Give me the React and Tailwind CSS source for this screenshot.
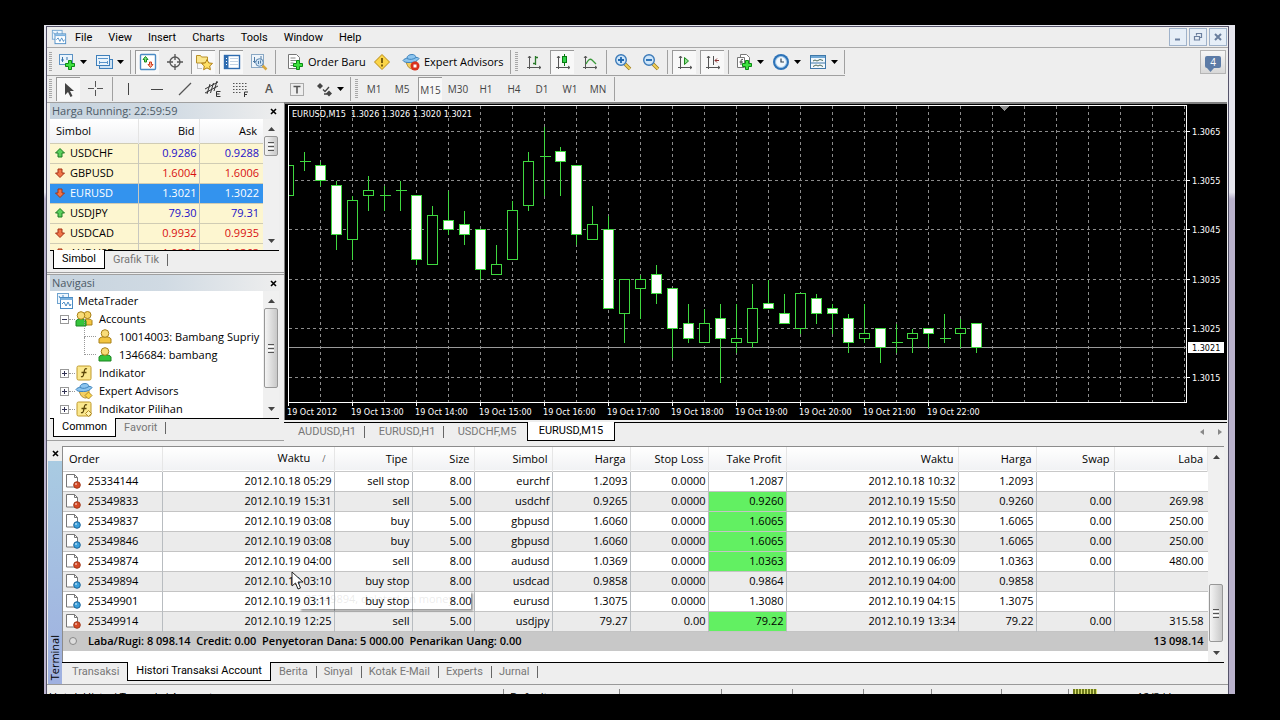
import { Fragment } from "react";

const quotes = [
  { symbol: "USDCHF", bid: "0.9286", ask: "0.9288", up: true },
  { symbol: "GBPUSD", bid: "1.6004", ask: "1.6006", up: false },
  { symbol: "EURUSD", bid: "1.3021", ask: "1.3022", up: false, selected: true },
  { symbol: "USDJPY", bid: "79.30", ask: "79.31", up: true },
  { symbol: "USDCAD", bid: "0.9932", ask: "0.9935", up: false },
  { symbol: "AUDUSD", bid: "1.0360", ask: "1.0363", up: false },
];

const orders = [
  ["25334144", "2012.10.18 05:29", "sell stop", "8.00", "eurchf", "1.2093", "0.0000", "1.2087", "2012.10.18 10:32", "1.2093", "", ""],
  ["25349833", "2012.10.19 15:31", "sell", "5.00", "usdchf", "0.9265", "0.0000", "0.9260", "2012.10.19 15:50", "0.9260", "0.00", "269.98"],
  ["25349837", "2012.10.19 03:08", "buy", "5.00", "gbpusd", "1.6060", "0.0000", "1.6065", "2012.10.19 05:30", "1.6065", "0.00", "250.00"],
  ["25349846", "2012.10.19 03:08", "buy", "5.00", "gbpusd", "1.6060", "0.0000", "1.6065", "2012.10.19 05:30", "1.6065", "0.00", "250.00"],
  ["25349874", "2012.10.19 04:00", "sell", "8.00", "audusd", "1.0369", "0.0000", "1.0363", "2012.10.19 06:09", "1.0363", "0.00", "480.00"],
  ["25349894", "2012.10.19 03:10", "buy stop", "8.00", "usdcad", "0.9858", "0.0000", "0.9864", "2012.10.19 04:00", "0.9858", "", ""],
  ["25349901", "2012.10.19 03:11", "buy stop", "8.00", "eurusd", "1.3075", "0.0000", "1.3080", "2012.10.19 04:15", "1.3075", "", ""],
  ["25349914", "2012.10.19 12:25", "sell", "5.00", "usdjpy", "79.27", "0.00", "79.22", "2012.10.19 13:34", "79.22", "0.00", "315.58"],
];

// open, high, low, close in points above 1.3000
const candles = [
  [52, 60, 51, 58], [59, 61, 57, 59], [58, 59, 54, 55], [54, 55, 41, 44],
  [43, 52, 39, 51], [52, 56, 49, 53], [52, 54, 49, 52], [53, 55, 49, 53],
  [52, 52, 38, 39], [38, 50, 38, 48], [47, 53, 44, 45], [46, 49, 42, 44],
  [45, 45, 35, 37], [36, 42, 36, 38], [39, 51, 39, 49], [50, 61, 49, 59],
  [60, 66, 52, 60], [61, 62, 52, 59], [58, 58, 42, 44], [43, 50, 43, 46],
  [45, 48, 29, 29], [28, 35, 22, 35], [33, 36, 27, 35], [36, 38, 30, 32],
  [33, 33, 19, 25], [26, 30, 22, 23], [22, 29, 22, 26], [27, 30, 14, 23],
  [22, 30, 20, 23], [22, 34, 21, 29], [30, 35, 29, 29], [28, 32, 26, 26],
  [25, 32, 24, 32], [31, 32, 26, 28], [29, 30, 24, 28], [27, 28, 20, 22],
  [23, 30, 22, 24], [25, 25, 18, 21], [22, 26, 20, 22], [23, 25, 20, 24],
  [25, 25, 21, 24], [23, 28, 22, 23], [24, 27, 21, 25], [26, 26, 20, 21],
];

const timeLabels = [
  "19 Oct 2012", "19 Oct 13:00", "19 Oct 14:00", "19 Oct 15:00", "19 Oct 16:00", "19 Oct 17:00",
  "19 Oct 18:00", "19 Oct 19:00", "19 Oct 20:00", "19 Oct 21:00", "19 Oct 22:00",
];

const priceY = (p) => Math.round(27 + (65 - p) * 4.918) + 0.5;

/* ---------- icons ---------- */

function Svg({ size = 18, children }) {
  return (
    <svg width={size} height={size} viewBox="0 0 18 18" fill="none" className="shrink-0">
      {children}
    </svg>
  );
}

const Plus = () => (
  <path d="M10.5 7.5h3v3h3v3h-3v3h-3v-3h-3v-3h3z" fill="#3fe03f" stroke="#0a8a14" />
);

const ZoomGlass = ({ plus }) => (
  <Svg>
    <path d="M11 11l5 5" stroke="#9a7a20" strokeWidth="3.5" />
    <path d="M11 11l5 5" stroke="#f0cf58" strokeWidth="2" />
    <circle cx="7" cy="7" r="5.3" fill="#cfe6fa" stroke="#3c7ab8" strokeWidth="1.4" />
    <path d={plus ? "M4 7h6M7 4v6" : "M4 7h6"} stroke="#1f68b0" strokeWidth="1.8" />
  </Svg>
);

const Axes = ({ children }) => (
  <Svg>
    <path d="M4.5 3v13M2 14.5h14M3 5l1.5-2L6 5M14 13l2 1.5-2 1.5" stroke="#555" />
    {children}
  </Svg>
);

const AppLogo = ({ size = 16 }) => (
  <Svg size={size}>
    <rect x="1.5" y="1.5" width="11" height="10" fill="#eef6fd" stroke="#6fa3cf" />
    <rect x="4.5" y="5.5" width="12" height="11" fill="#fff" stroke="#4a8bc4" />
    <path d="M4.5 7h12" stroke="#7db2de" strokeWidth="2" />
    <path d="M6 12l2-2 2 4 2-4 2 4 1-2M3 4l1 2M7 3v2" stroke="#4a8bc4" />
  </Svg>
);

const NewChartIcon = () => (
  <Svg>
    <rect x="1.5" y="1.5" width="13" height="10" fill="#eaf4fc" stroke="#5b92c4" />
    <path d="M4.5 4v5M3 7h3M9 4v3" stroke="#3874ab" />
    <Plus />
  </Svg>
);

const ProfilesIcon = () => (
  <Svg>
    <rect x="4.5" y="6.5" width="13" height="9" fill="#cfe3f4" stroke="#3f7fba" />
    <rect x="1.5" y="2.5" width="13" height="10" fill="#eaf4fc" stroke="#3f7fba" />
    <path d="M3 5.5h10M4 9.5h9M4.5 8v3M12.5 8v3" stroke="#5a95cb" />
  </Svg>
);

const MarketIcon = () => (
  <Svg>
    <rect x="1.5" y="1.5" width="15" height="15" rx="1" fill="#fff" stroke="#4a8bc4" strokeWidth="1.4" />
    <path d="M6.5 3.5L9 6.5H7.5V9h-2V6.5H4z" fill="#7de07d" stroke="#168a1c" />
    <path d="M11.5 14.5L14 11.5h-1.5V9h-2v2.5H9z" fill="#f6b09a" stroke="#d03a18" />
  </Svg>
);

const TargetIcon = () => (
  <Svg>
    <circle cx="9" cy="9" r="5" stroke="#555" strokeWidth="1.3" />
    <path d="M9 1v6M9 11v6M1 9h6M11 9h6" stroke="#555" strokeWidth="1.3" />
  </Svg>
);

const NavigatorIcon = () => (
  <Svg>
    <path d="M1.5 2.5h4l1 1.5h6v6h-11z" fill="#fbe68c" stroke="#b8902a" />
    <path d="M2.5 10.5v5h4" stroke="#888" strokeDasharray="1 1" />
    <path d="M12 6.5l1.7 3.4 3.8.5-2.8 2.6.7 3.7-3.4-1.8-3.4 1.8.7-3.7-2.8-2.6 3.8-.5z" fill="#ffe066" stroke="#b07f12" />
  </Svg>
);

const TerminalIcon = () => (
  <Svg>
    <rect x="1.5" y="2.5" width="15" height="13" fill="#fff" stroke="#2f6cb0" strokeWidth="1.4" />
    <rect x="2" y="3" width="3.5" height="12" fill="#2f6cb0" />
    <path d="M7 5.5h8M7 8.5h8M7 11.5h8" stroke="#c3d3e4" />
    <path d="M3 5.5h1M3 8.5h1M3 11.5h1" stroke="#fff" />
  </Svg>
);

const TesterIcon = () => (
  <Svg>
    <rect x="1.5" y="1.5" width="12" height="13" fill="#eef4fa" stroke="#8aa8c4" />
    <path d="M4.5 4v6M3 8.5h3M11 3v4" stroke="#4f7aa4" />
    <path d="M12.5 12.5l4 4" stroke="#d8a840" strokeWidth="2.5" />
    <circle cx="9.5" cy="9.5" r="3.8" fill="#cfe4f6" stroke="#5f88b0" />
    <path d="M8.5 8v3M10.5 7.5v3" stroke="#4f7aa4" />
  </Svg>
);

const OrderIcon = () => (
  <Svg>
    <path d="M2.5 1.5h8l3 3v11h-11z" fill="#fff" stroke="#777" />
    <path d="M4.5 5h5M4.5 7.5h6M4.5 10h3M4.5 12.5h3" stroke="#888" />
    <Plus />
  </Svg>
);

const WarnIcon = () => (
  <Svg>
    <path d="M9 1.5L16.5 9 9 16.5 1.5 9z" fill="#fbd548" stroke="#b98a12" strokeLinejoin="round" />
    <path d="M9 5v5M9 11.5v2" stroke="#5c4300" strokeWidth="1.6" />
  </Svg>
);

const ExpertIcon = ({ size = 18, stop }) => (
  <Svg size={size}>
    <path d="M4 8c1 5 3 8 7 8 3-1 3-5 3-8z" fill="#f3cf62" stroke="#b08a28" />
    <path d="M1 7.5C2 5.5 4 6 5 5c0-2 2-3.5 5-3.5 2.5 0 3.5 1 4 3 1.5 0 2.5 0 3 1-2 3-5 4-8.5 4S2 9.5 1 7.5z" fill="#8cc4ee" stroke="#3f84bd" />
    <path d="M5 5.5c3 1.5 6 1 9-1" stroke="#3f84bd" />
    {stop ? (
      <>
        <circle cx="13" cy="13" r="4.5" fill="#d9301c" />
        <rect x="11.5" y="11.5" width="3" height="3" fill="#fff" />
      </>
    ) : (
      <path d="M13.5 10l3.5 3.5-3.5 3.5-3.5-3.5z" fill="#fbd548" stroke="#b08a28" />
    )}
  </Svg>
);

const BarsIcon = () => (
  <Axes><path d="M10.5 3v9M8 10.5h2.5M10.5 4.5H13" stroke="#2a7a2a" strokeWidth="1.3" /></Axes>
);
const CandleIcon = () => (
  <Axes><path d="M10.5 1v12" stroke="#0a7a14" /><rect x="8.5" y="3.5" width="4" height="6" fill="#32d24a" stroke="#0a7a14" /></Axes>
);
const LineIcon = () => (
  <Axes><path d="M5 11c2-4 4-6 6-4l4 4" stroke="#3a9a3a" strokeWidth="1.3" /></Axes>
);
const ScrollIcon = () => (
  <Axes><path d="M8.5 4.5v7l4-3.5z" fill="#8ee08e" stroke="#1c8a1c" /></Axes>
);
const ShiftIcon = () => (
  <Axes><path d="M9.5 3v9" stroke="#555" /><path d="M15 7.5h-4M13 5.5l-2 2 2 2" stroke="#8a3030" /></Axes>
);

const IndicatorAddIcon = () => (
  <Svg>
    <path d="M5.5 1.5h6l3 3v8h-9z" fill="#fff" stroke="#777" />
    <path d="M2.5 4.5h7v10h-7z" fill="#fff" stroke="#777" />
    <path d="M8 6.5c-2-1-2 1-2 2.5v3M4.5 9H8" stroke="#444" />
    <Plus />
  </Svg>
);

const ClockIcon = () => (
  <Svg>
    <circle cx="9" cy="9" r="8" fill="#2d73b8" />
    <circle cx="9" cy="9" r="5.5" fill="#f2f8fd" stroke="#9cc5e8" />
    <path d="M9 5.5V9h3" stroke="#345" strokeWidth="1.2" />
  </Svg>
);

const TemplateIcon = () => (
  <Svg>
    <rect x="1.5" y="2.5" width="15" height="13" fill="#f2f8fd" stroke="#3f78a8" />
    <path d="M2 4h14" stroke="#6fa8d6" strokeWidth="2" />
    <path d="M2 10h14" stroke="#3f78a8" />
    <path d="M4 8l2-1 2 1 3-1.5 3 1M4 13.5l3-1.5 2 1 2-1 3 1.5" stroke="#4b6a58" />
  </Svg>
);

const CursorIcon = () => (
  <Svg><path d="M5 2v12l3-3 2.5 5 2-1-2.5-5H14z" fill="#444" /></Svg>
);
const CrossIcon = () => (
  <Svg><path d="M8.5 1v6M8.5 10v6M1 8.5h6M10 8.5h6" stroke="#555" /></Svg>
);
const VLineIcon = () => <Svg><path d="M8.5 3v12" stroke="#444" /></Svg>;
const HLineIcon = () => <Svg><path d="M3 9.5h12" stroke="#444" /></Svg>;
const TrendIcon = () => <Svg><path d="M3 15L15 3" stroke="#555" strokeWidth="1.2" /></Svg>;
const ChannelIcon = () => (
  <Svg>
    <path d="M1 9l13-7M1 13L14 6M3 14L6 4M6.5 13l3-10M10 11l3-10" stroke="#333" />
    <path d="M16.5 11.5h-4v5h4M12.5 14h3" stroke="#333" />
  </Svg>
);
const FiboIcon = () => (
  <Svg>
    <path d="M1 3.5h15M1 6.5h15M1 9.5h15M1 12.5h9" stroke="#555" strokeDasharray="1.5 1.5" />
    <path d="M16 12h-3.5v5M12.5 14.5H15" stroke="#333" />
  </Svg>
);
const LabelIcon = () => (
  <Svg>
    <rect x="2.5" y="3.5" width="13" height="12" stroke="#666" strokeDasharray="1 1" />
    <path d="M5.5 6.5h7M9 6.5v7" stroke="#555" strokeWidth="1.6" />
  </Svg>
);
const ArrowsIcon = () => (
  <Svg>
    <path d="M5 3l3 3-3 3-3-3z" fill="#444" />
    <path d="M8 9.5l2 2L14 7M9 14h3" stroke="#444" strokeWidth="1.3" />
    <path d="M14 10.5l3 3-3 3-3-3z" fill="#444" />
  </Svg>
);

const UserIcon = ({ green, pair }) => (
  <Svg>
    {pair && (
      <>
        <circle cx="12.5" cy="5" r="3.5" fill="#f6d264" stroke="#a88018" />
        <path d="M8 15V10.5c1-2 8-2 9 0V15z" fill="#f3c540" stroke="#a88018" />
      </>
    )}
    <path d={pair ? "M1 16v-5c1-3 9-3 10 0v5z" : "M3 15v-4c1-3 11-3 12 0v4z"} fill={green ? "#35c43c" : "#f3c540"} stroke={green ? "#1a8420" : "#a88018"} />
    <circle cx={pair ? 6 : 9} cy="5.5" r="3.8" fill="#f9dc78" stroke="#a88018" />
  </Svg>
);

const FunctionIcon = ({ custom }) => (
  <Svg>
    <rect x="2" y="2" width="14" height="14" rx="1.5" fill="#fbe88e" stroke="#c09a2c" />
    <path d="M12 5c-2-1-2.5.5-3 3.5s-1 5-3 4M6.5 8.5h5" stroke="#5b4608" strokeWidth="1.3" />
    {custom && <path d="M13.5 10.5l3 3-3 3-3-3z" fill="#fff3b0" stroke="#b08a28" />}
  </Svg>
);

const OrderDoc = ({ sell }) => (
  <svg width="16" height="16" viewBox="0 0 16 16" fill="none" className="shrink-0">
    <path d="M1.5 1.5h8l3 3v9.5h-11z" fill="#fff" stroke="#777" />
    <path d="M9.5 1.5v3h3" stroke="#777" />
    <circle cx="12" cy="12" r="3.3" fill={sell ? "#d64a26" : "#3aa0dc"} stroke={sell ? "#a03a1c" : "#1c6498"} />
    <circle cx="11" cy="11" r="1" fill="#fff" opacity=".6" />
  </svg>
);

const QuoteArrow = ({ up }) => (
  <svg width="12" height="12" viewBox="0 0 12 12" className="shrink-0">
    {up ? (
      <path d="M6 1.5l4.5 4.5H8v4H4V6H1.5z" fill="#5ccf5c" stroke="#1f7d24" />
    ) : (
      <path d="M6 10.5L1.5 6H4V2h4v4h2.5z" fill="#ef7548" stroke="#a53216" />
    )}
  </svg>
);

const Caret = ({ dir = "down", className = "" }) => {
  const d = { down: "M0 1h7L3.5 5z", up: "M0 5h7L3.5 1z", left: "M5 0v6L1 3z", right: "M2 0v6l4-3z" }[dir];
  return (
    <svg width="7" height="6" viewBox="0 0 7 6" className={"shrink-0 " + className}>
      <path d={d} fill="currentColor" />
    </svg>
  );
};

/* ---------- small controls ---------- */

function Grip() {
  return <span className="h-5 w-[3px] bg-[repeating-linear-gradient(#a8a8a8_0_1px,transparent_1px_2px)]" />;
}

const Sep = () => <span className="h-6 w-px bg-[#a0a0a0]" />;

function Tool({ label, pressed, menu, children }) {
  return (
    <button
      aria-label={label}
      className={`flex h-6 items-center justify-center ${menu ? "w-[33px] gap-1" : "w-6"} ${
        pressed ? "border-t border-l border-[#999] bg-[#f8f8f8]" : ""
      }`}
    >
      {children}
      {menu && <Caret className="text-black" />}
    </button>
  );
}

function Scrollbar({ thumb }) {
  return (
    <div className="flex w-4 shrink-0 flex-col items-center bg-[#f0f0f0]">
      <Caret dir="up" className="mt-[7px] mb-1 text-[#444]" />
      {thumb}
      <Caret dir="down" className="mt-auto mb-1.5 text-[#444]" />
    </div>
  );
}

const Thumb = ({ className }) => (
  <div className={`flex w-3.5 shrink-0 flex-col items-center justify-center gap-px rounded-xs border border-[#979797] bg-linear-to-r from-[#f4f4f4] to-[#c8c8c8] ${className}`}>
    <span className="h-px w-1.5 bg-[#555]" />
    <span className="h-px w-1.5 bg-white" />
    <span className="h-px w-1.5 bg-[#555]" />
    <span className="h-px w-1.5 bg-white" />
    <span className="h-px w-1.5 bg-[#555]" />
  </div>
);

const CloseX = () => (
  <button aria-label="Close">
    <svg width="7" height="7" viewBox="0 0 7 7"><path d="M1 1l5 5M6 1L1 6" stroke="#000" strokeWidth="1.6" /></svg>
  </button>
);

function PaneTitle({ children }) {
  return (
    <div className="flex h-4 items-center justify-between bg-linear-to-r from-[#c6d3de] via-[#d0dae3] to-[#eeeeee] px-0.5 text-[#4c5a66]">
      <span>{children}</span>
      <CloseX />
    </div>
  );
}

// sheet tabs hanging from a black line
function SheetTabs({ tabs, active, className, tabClass }) {
  return (
    <div className={`flex items-start border-t border-black font-[Roboto,'Liberation_Sans',sans-serif] text-[#777] ${className}`}>
      {tabs.map((t, i) => (
        <button
          key={t}
          className={`flex h-[18px] items-center justify-center whitespace-nowrap ${tabClass} ${
            t === active ? "-mt-px h-[19px] border-x border-b border-black bg-white text-black" : ""
          }`}
        >
          {t}
          {t !== active && tabs[i + 1] !== active && <span className="-mr-[9px] ml-2 h-3 w-px bg-[#666]" />}
        </button>
      ))}
    </div>
  );
}

/* ---------- sections ---------- */

function MenuBar() {
  return (
    <div className="flex h-[21px] items-center border-b border-[#a8a8a8] pl-1">
      <AppLogo />
      <nav className="flex flex-1 gap-4 pt-px pl-2 font-[Roboto,'Liberation_Sans',sans-serif]">
        {["File", "View", "Insert", "Charts", "Tools", "Window", "Help"].map((m) => (
          <button key={m}>{m}</button>
        ))}
      </nav>
      <div className="flex gap-0.5 pr-px text-[#6b7f9e]">
        {[
          ["Minimize", "M3 8.5h5"],
          ["Restore", "M4.5 4.5v-2h5v4h-2M2.5 5.5h5v3.5h-5z"],
          ["Close", "M3 3l6 6M9 3L3 9"],
        ].map(([label, d]) => (
          <button key={label} aria-label={label} className="flex h-[18px] w-[18px] items-center justify-center border border-[#9fb2ca] bg-[#e6eef7]">
            <svg width="12" height="12" viewBox="0 0 12 12" fill="none"><path d={d} stroke="currentColor" strokeWidth={label === "Restore" ? 1.2 : 2} /></svg>
          </button>
        ))}
      </div>
    </div>
  );
}

function Toolbars() {
  return (
    <div className="flex justify-between">
      <div>
        <div className="flex h-7 w-max items-center gap-1 border-b border-[#a0a0a0] pl-0.5">
          <Grip />
          <Tool label="New chart" menu><NewChartIcon /></Tool>
          <Tool label="Profiles" menu><ProfilesIcon /></Tool>
          <Sep />
          <Tool label="Market watch" pressed><MarketIcon /></Tool>
          <Tool label="Data window"><TargetIcon /></Tool>
          <Tool label="Navigator" pressed><NavigatorIcon /></Tool>
          <Tool label="Terminal" pressed><TerminalIcon /></Tool>
          <Tool label="Strategy tester"><TesterIcon /></Tool>
          <Sep />
          <button className="flex w-[86px] items-center gap-1 pl-1.5 whitespace-nowrap"><OrderIcon />Order Baru</button>
          <Tool label="MetaEditor"><WarnIcon /></Tool>
          <button className="flex w-[108px] items-center gap-1 pl-1 whitespace-nowrap"><ExpertIcon stop />Expert Advisors</button>
          <Sep />
          <Grip />
          <Tool label="Bar chart"><BarsIcon /></Tool>
          <Tool label="Candlesticks" pressed><CandleIcon /></Tool>
          <Tool label="Line chart"><LineIcon /></Tool>
          <Sep />
          <Tool label="Zoom in"><ZoomGlass plus /></Tool>
          <Tool label="Zoom out"><ZoomGlass /></Tool>
          <Sep />
          <Tool label="Auto scroll" pressed><ScrollIcon /></Tool>
          <Tool label="Chart shift" pressed><ShiftIcon /></Tool>
          <Sep />
          <Tool label="Indicators" menu><IndicatorAddIcon /></Tool>
          <Tool label="Periods" menu><ClockIcon /></Tool>
          <Tool label="Templates" menu><TemplateIcon /></Tool>
          <Sep />
        </div>
        <div className="flex h-[26px] items-center gap-1 pl-0.5">
          <Grip />
          <Tool label="Cursor" pressed><CursorIcon /></Tool>
          <Tool label="Crosshair"><CrossIcon /></Tool>
          <Sep />
          <Tool label="Vertical line"><VLineIcon /></Tool>
          <Tool label="Horizontal line"><HLineIcon /></Tool>
          <Tool label="Trendline"><TrendIcon /></Tool>
          <Tool label="Channel"><ChannelIcon /></Tool>
          <Tool label="Fibonacci"><FiboIcon /></Tool>
          <Tool label="Text"><span className="text-[12px] font-semibold text-[#555]">A</span></Tool>
          <Tool label="Text label"><LabelIcon /></Tool>
          <Tool label="Arrows" menu><ArrowsIcon /></Tool>
          <Sep />
          <Grip />
          {["M1", "M5", "M15", "M30", "H1", "H4", "D1", "W1", "MN"].map((tf) => (
            <Tool key={tf} label={tf} pressed={tf === "M15"}>
              <span className="text-[10px] text-[#444]">{tf}</span>
            </Tool>
          ))}
          <Sep />
        </div>
      </div>
      <button aria-label="Messages" className="mt-0.5 mr-0.5 flex h-6 w-[26px] items-center justify-center border border-[#b5b5b5] bg-linear-to-b from-[#f6f6f6] to-[#d8d8d8]">
        <span className="relative flex h-3 w-4 items-center justify-center rounded-xs bg-[#5c7ba6] text-[10px] text-white">
          4
          <Caret className="absolute top-[11px] left-0.5 text-[#5c7ba6]" />
        </span>
      </button>
    </div>
  );
}

function MarketWatch() {
  return (
    <section className="border-y border-[#a0a0a0] pr-[5px] pl-[3px]">
      <PaneTitle>Harga Running: 22:59:59</PaneTitle>
      <div className="flex h-[131px] overflow-hidden bg-white">
        <table className="w-full table-fixed border-collapse self-start">
          <colgroup>
            <col className="w-[88px]" />
            <col className="w-[61px]" />
            <col />
          </colgroup>
          <thead>
            <tr className="h-6 bg-linear-to-b from-white to-[#f0f1f3]">
              <th className="border-r border-[#e4e4e4] pl-1.5 text-left font-normal">Simbol</th>
              <th className="border-r border-[#e4e4e4] pr-1 text-right font-normal">Bid</th>
              <th className="pr-1.5 text-right font-normal">Ask</th>
            </tr>
          </thead>
          <tbody>
            {quotes.map((q) => (
              <tr
                key={q.symbol}
                className={`h-5 border-t border-[#d0ccb4] ${
                  q.selected ? "bg-[#3393ee] text-white" : q.up ? "bg-[#fdf6d0] text-[#1c10c8]" : "bg-[#fdf6d0] text-[#d81010]"
                }`}
              >
                <td className="border-r border-[#c8c8c0] pl-1">
                  <span className={`flex items-center gap-1 ${q.selected ? "text-white" : "text-black"}`}>
                    <QuoteArrow up={q.up} />
                    {q.symbol}
                  </span>
                </td>
                <td className="border-r border-[#c8c8c0] pr-0.5 text-right">{q.bid}</td>
                <td className="pr-1 text-right">{q.ask}</td>
              </tr>
            ))}
          </tbody>
        </table>
        <Scrollbar thumb={<Thumb className="h-5" />} />
      </div>
      <SheetTabs tabs={["Simbol", "Grafik Tik"]} active="Simbol" className="h-[22px] pl-[3px]" tabClass="px-2" />
    </section>
  );
}

function Expander({ open }) {
  return (
    <svg width="9" height="9" viewBox="0 0 9 9" fill="none">
      <rect x=".5" y=".5" width="8" height="8" fill="#fff" stroke="#999" />
      <path d={open ? "M2 4.5h5" : "M2 4.5h5M4.5 2v5"} stroke="#335" />
    </svg>
  );
}

function TreeRow({ open, icon, children }) {
  return (
    <li className="flex h-[18px] items-center">
      <Expander open={open} />
      <span className="w-1.5 border-t border-dotted border-[#999]" />
      {icon}
      <span className="pl-1.5">{children}</span>
    </li>
  );
}

function LeafRow({ icon, children }) {
  return (
    <li className="flex h-[18px] items-center pl-6">
      <span className="-mt-[18px] h-[18px] w-3 border-b border-l border-dotted border-[#999]" />
      {icon}
      <span className="pl-[5px] whitespace-nowrap">{children}</span>
    </li>
  );
}

function Navigator() {
  return (
    <section className="mt-px border-y border-[#a0a0a0] pr-[5px] pl-[3px]">
      <PaneTitle>Navigasi</PaneTitle>
      <div className="flex h-[127px] overflow-hidden bg-white">
        <ul className="min-w-0 flex-1 overflow-hidden pt-px pl-2.5">
          <li className="-ml-1 flex h-[18px] items-center gap-1"><AppLogo size={18} />MetaTrader</li>
          <TreeRow open icon={<UserIcon pair green />}>Accounts</TreeRow>
          <LeafRow icon={<UserIcon />}>10014003: Bambang Supriy</LeafRow>
          <LeafRow icon={<UserIcon green />}>1346684: bambang</LeafRow>
          <TreeRow icon={<FunctionIcon />}>Indikator</TreeRow>
          <TreeRow icon={<ExpertIcon />}>Expert Advisors</TreeRow>
          <TreeRow icon={<FunctionIcon custom />}>Indikator Pilihan</TreeRow>
        </ul>
        <Scrollbar thumb={<Thumb className="h-20" />} />
      </div>
      <SheetTabs tabs={["Common", "Favorit"]} active="Common" className="h-[22px] pl-[3px]" tabClass="px-2" />
    </section>
  );
}

function Chart() {
  return (
    <svg width="942" height="316" viewBox="0 0 942 316" className="block text-[9px]" shapeRendering="crispEdges">
      <g stroke="#8c8c8c" strokeDasharray="3 3">
        {Array.from({ length: 28 }, (_, i) => (
          <path key={i} d={`M${35.5 + i * 32} 2V298`} />
        ))}
        {[65, 55, 45, 35, 25, 15].map((p) => (
          <path key={p} d={`M4 ${priceY(p)}H901`} />
        ))}
      </g>
      <path d={`M4 ${priceY(21)}H901`} stroke="#9a9a9a" />
      <path d="M714 2h10l-5 5z" fill="#8c8c8c" />

      <clipPath id="plot"><rect x="3" y="1" width="899" height="298" /></clipPath>
      <g clipPath="url(#plot)" stroke="#3fd83f">
        {candles.map(([open, high, low, close], i) => {
          const x = 3.5 + i * 16;
          const top = priceY(Math.max(open, close));
          const height = priceY(Math.min(open, close)) - top;
          return (
            <Fragment key={i}>
              <path d={`M${x} ${priceY(high)}V${priceY(low)}`} />
              {height === 0 ? (
                <path d={`M${x - 5} ${top}h11`} />
              ) : (
                <rect x={x - 5} y={top} width="10" height={height} fill={close > open ? "#000" : "#fff"} />
              )}
            </Fragment>
          );
        })}
      </g>

      <rect x="3.5" y="1.5" width="898" height="297" fill="none" stroke="#fff" />
      <g fill="#fff" className="font-['DejaVu_Sans_Condensed','DejaVu_Sans',sans-serif]">
        <text x="7" y="13" xmlSpace="preserve">EURUSD,M15  1.3026 1.3026 1.3020 1.3021</text>
        {[65, 55, 45, 35, 25, 15].map((p) => (
          <Fragment key={p}>
            <path d={`M902 ${priceY(p)}h3`} stroke="#fff" />
            <text x="907" y={priceY(p) + 3}>{`1.30${p}`}</text>
          </Fragment>
        ))}
        {timeLabels.map((t, i) => (
          <Fragment key={t}>
            <path d={`M${3.5 + i * 64} 299v3`} stroke="#fff" />
            <text x={2 + i * 64} y="311">{t}</text>
          </Fragment>
        ))}
        <rect x="903" y={priceY(21) - 6} width="36" height="11" />
        <text x="907" y={priceY(21) + 3} fill="#000">1.3021</text>
      </g>
    </svg>
  );
}

function ChartArea() {
  return (
    <section className="min-w-0 flex-1 pr-px">
      <div className="overflow-hidden border-t-2 border-l border-[#808080] bg-black"><Chart /></div>
      <div className="mt-0.5 flex h-[19px] items-stretch">
        <SheetTabs
          tabs={["AUDUSD,H1", "EURUSD,H1", "USDCHF,M5", "EURUSD,M15"]}
          active="EURUSD,M15"
          className="h-[19px] flex-1 pl-[3px]"
          tabClass="w-20 last:w-[88px]"
        />
        <div className="flex items-center gap-2.5 border-t border-black pr-1 text-[#888]">
          <button aria-label="Scroll tabs left"><Caret dir="left" /></button>
          <button aria-label="Scroll tabs right"><Caret dir="right" /></button>
        </div>
      </div>
    </section>
  );
}

const heads = ["Order", "Waktu", "Tipe", "Size", "Simbol", "Harga", "Stop Loss", "Take Profit", "Waktu", "Harga", "Swap", "Laba"];

function History() {
  return (
    <table className="w-full table-fixed border-collapse self-start">
      <colgroup>
        <col className="w-[99px]" />
        <col className="w-[172px]" />
        <col className="w-[78px]" />
        <col className="w-[62px]" />
        <col className="w-[78px]" />
        <col className="w-[78px]" />
        <col className="w-[78px]" />
        <col className="w-[78px]" />
        <col className="w-[172px]" />
        <col className="w-[78px]" />
        <col className="w-[78px]" />
        <col />
      </colgroup>
      <thead>
        <tr className="h-6 border-b border-[#c8c8c8] bg-linear-to-b from-white to-[#f1f2f4]">
          {heads.map((h, i) => (
            <th key={i} className={`border-r border-[#e6e6e6] font-normal ${i === 0 ? "pl-1.5 text-left" : "pr-1 text-right"}`}>
              {h}
              {i === 1 && <span className="pr-1 pl-3 text-[9px] text-[#666]">/</span>}
            </th>
          ))}
        </tr>
      </thead>
      <tbody>
        {orders.map((row) => {
          const hit = row[11] !== "";
          return (
            <tr key={row[0]} className="h-5 border-b border-[#c4c4c4] even:bg-[#ebebeb]">
              {row.map((cell, i) => (
                <td
                  key={i}
                  className={`border-r border-[#b8bcc0] last:border-r-0 last:pr-1 ${i === 0 ? "pl-0.5" : "pr-0.5 text-right"} ${
                    i === 7 && hit ? "bg-[#62f062] bg-clip-padding" : ""
                  }`}
                >
                  {i === 0 ? (
                    <span className="flex items-center gap-[7px]">
                      <OrderDoc sell={row[2].startsWith("sell")} />
                      {cell}
                    </span>
                  ) : (
                    cell
                  )}
                </td>
              ))}
            </tr>
          );
        })}
      </tbody>
      <tfoot>
        <tr className="h-5 bg-[#c8c8c8] font-semibold">
          <td colSpan={11}>
            <span className="flex items-center gap-[11px] pl-1.5">
              <span className="h-2 w-2 rounded-full border border-[#888] bg-[#ddd]" />
              <span className="whitespace-pre">Laba/Rugi: 8 098.14  Credit: 0.00  Penyetoran Dana: 5 000.00  Penarikan Uang: 0.00</span>
            </span>
          </td>
          <td className="pr-1 text-right">13 098.14</td>
        </tr>
      </tfoot>
    </table>
  );
}

function Terminal() {
  return (
    <section className="mt-[5px] flex pr-1 pl-px">
      <div className="flex w-3.5 flex-col items-center">
        <div className="flex h-[15px] items-center"><CloseX /></div>
        <div className="flex w-full flex-1 items-end justify-center bg-linear-to-b from-[#a9cbe2] to-[#9fb0e0] pb-1">
          <span className="rotate-180 leading-[14px] [writing-mode:vertical-rl]">Terminal</span>
        </div>
      </div>
      <div className="min-w-0 flex-1">
        <div className="relative flex h-[216px] border-t border-l border-[#8c8c8c] bg-white">
          <History />
          <Scrollbar thumb={<Thumb className="mt-[120px] h-[58px]" />} />
          {/* fading tooltip and mouse pointer */}
          <div className="pointer-events-none absolute top-36 left-[236px] h-[18px] w-[172px] overflow-hidden pl-1.5 whitespace-nowrap text-[#999]/20 shadow-[2px_2px_2px_#0006]">
            25349894, deleted on money
          </div>
          <svg width="13" height="20" viewBox="0 0 13 20" className="pointer-events-none absolute top-[124px] left-[228px]">
            <path d="M1 1v14l3.5-3 2.5 6 2.5-1L7 11h5z" fill="#fff" stroke="#222" />
          </svg>
        </div>
        <SheetTabs
          tabs={["Transaksi", "Histori Transaksi Account", "Berita", "Sinyal", "Kotak E-Mail", "Experts", "Jurnal"]}
          active="Histori Transaksi Account"
          className="h-[22px] pl-0.5"
          tabClass="px-2"
        />
      </div>
    </section>
  );
}

function StatusBar() {
  return (
    <footer className="flex h-2.5 overflow-hidden border-t border-[#999] pt-1 leading-4 whitespace-nowrap">
      <span className="flex-1 pl-0.5">Untuk Histori Transaksi Account</span>
      <span className="w-[116px] border-l border-[#888] pl-1.5">Default</span>
      <span className="w-[102px] border-l border-[#888]" />
      <span className="w-[71px] border-l border-[#888]" />
      <span className="w-[71px] border-l border-[#888]" />
      <span className="w-[68px] border-l border-[#888]" />
      <span className="w-[70px] border-l border-[#888]" />
      <span className="w-[67px] border-l border-[#888]" />
      <span className="flex w-40 gap-10 border-l border-[#888] pl-1">
        <span className="h-3 w-6 bg-[repeating-linear-gradient(90deg,#6d7a1c_0_2px,#d8e070_2px_3px)]" />
        12/3 kb
      </span>
    </footer>
  );
}

export default function App() {
  return (
    <div className="min-h-screen bg-black pt-[25px] pr-[45px] pb-[25px] pl-11 font-['Open_Sans','Liberation_Sans',sans-serif] text-[11px] leading-4 text-black">
      <div className="bg-linear-to-b from-[#e6e6ee] from-25% to-[#b9b2cc] to-26% pt-px pr-1.5 pl-0.5">
        <main className="border-x border-t border-[#55536a] bg-[#eeeeee]">
          <MenuBar />
          <Toolbars />
          <div className="flex">
            <div className="w-[237px] shrink-0">
              <MarketWatch />
              <Navigator />
            </div>
            <ChartArea />
          </div>
          <Terminal />
          <StatusBar />
        </main>
      </div>
    </div>
  );
}
